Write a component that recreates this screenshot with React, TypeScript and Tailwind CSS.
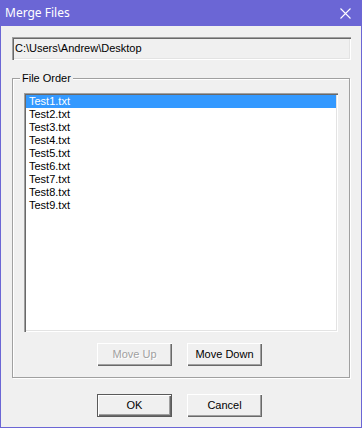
const FILES = ["Test1.txt", "Test2.txt", "Test3.txt", "Test4.txt", "Test5.txt", "Test6.txt", "Test7.txt", "Test8.txt", "Test9.txt"];

const FONT = { fontFamily: '"Liberation Sans", Arial, sans-serif' };

// classic 3D button, optional default frame
function Button({ label, disabled, isDefault }: { label: string; disabled?: boolean; isDefault?: boolean }) {
  const edge = isDefault
    ? "border border-[#5a5a5a] shadow-[inset_1px_1px_0_#fff,inset_-1px_-1px_0_#696969,inset_-2px_-2px_0_#a0a0a0]"
    : "shadow-[inset_1px_1px_0_#fff,inset_-1px_-1px_0_#696969,inset_-2px_-2px_0_#a0a0a0]";
  return (
    <div
      className={`flex h-[23px] w-[75px] items-center justify-center bg-[#f0f0f0] text-[11px] ${edge} ${
        disabled ? "text-[#a0a0a0] [text-shadow:1px_1px_0_#fff]" : "text-black"
      }`}
    >
      {label}
    </div>
  );
}

export default function App() {
  const selected = 0;

  return (
    <div className="flex h-[428px] w-[362px] flex-col bg-[#6b66d5] px-px pb-px" style={FONT}>
      {/* title bar */}
      <div className="flex h-[26px] shrink-0 items-center justify-between pl-[4px] pr-[10px]">
        <span className="text-[12px] text-white" style={{ fontFamily: '"Noto Sans", "Open Sans", sans-serif' }}>
          Merge Files
        </span>
        <svg width="11" height="11" viewBox="0 0 11 11" className="mt-px">
          <path d="M0.5 0.5L10.5 10.5M10.5 0.5L0.5 10.5" stroke="#fff" strokeWidth="1.1" />
        </svg>
      </div>

      <div className="flex flex-1 flex-col bg-[#f0f0f0] pl-[11px] pr-[10px] pt-[11px]">
        {/* folder path (read only) */}
        <div className="flex h-[23px] w-[339px] items-center bg-[#f0f0f0] pl-[3px] text-[11px] text-black shadow-[inset_1px_1px_0_#a0a0a0,inset_2px_2px_0_#696969,inset_-1px_-1px_0_#fff,inset_-2px_-2px_0_#e3e3e3]">
          C:\Users\Andrew\Desktop
        </div>

        {/* group box */}
        <div className="relative mt-[18px] flex h-[300px] w-[338px] flex-col border border-[#a0a0a0] px-[11px] pb-[10px] pt-[14px] shadow-[inset_1px_1px_0_#fff,1px_1px_0_#fff]">
          <span className="absolute left-[7px] top-[-7px] bg-[#f0f0f0] px-[2px] text-[11px] leading-[13px] text-black">
            File Order
          </span>

          <div className="flex h-[239px] w-[314px] flex-col bg-white p-[2px] shadow-[inset_1px_1px_0_#a0a0a0,inset_2px_2px_0_#696969,inset_-1px_-1px_0_#fff,inset_-2px_-2px_0_#e3e3e3]">
            {FILES.map((f, i) => (
              <div
                key={f}
                className={`h-[13px] pl-[3px] text-[11px] leading-[13px] ${
                  i === selected ? "bg-[#3399ff] text-white" : "text-black"
                }`}
              >
                {f}
              </div>
            ))}
          </div>

          <div className="mt-[11px] flex gap-[15px] pl-[73px]">
            <Button label="Move Up" disabled />
            <Button label="Move Down" />
          </div>
        </div>

        <div className="mt-[16px] flex gap-[15px] pl-[85px]">
          <Button label="OK" isDefault />
          <Button label="Cancel" />
        </div>
      </div>
    </div>
  );
}
